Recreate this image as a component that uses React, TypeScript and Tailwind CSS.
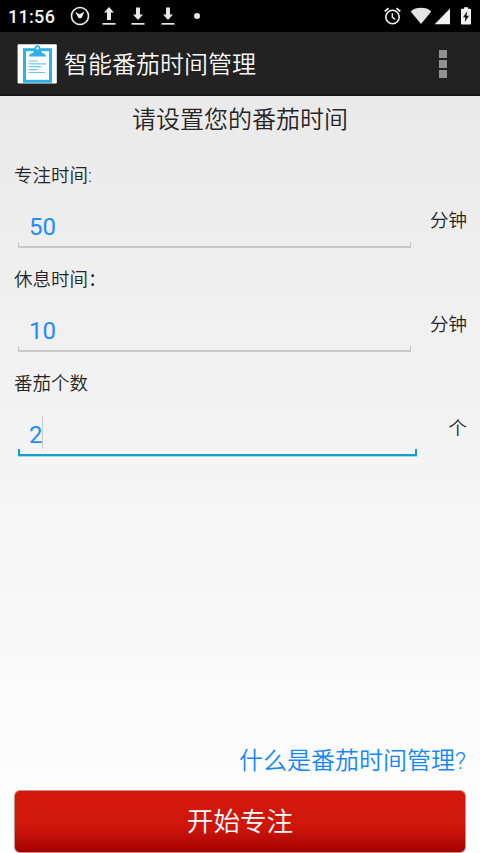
import React from "react";

const cjk = "font-['Roboto','Noto_Sans_CJK_SC',sans-serif]";

function ClockMark() {
  return (
    <svg className="block" width="20" height="20" viewBox="0 0 20 20" fill="none" stroke="#f2f2f2">
      <circle cx="10" cy="10" r="8.5" strokeWidth="1.6" />
      <path d="M5.2 5.8 L9.6 8.2 L14.4 5.5 L11.8 11.4 Q9.8 13.2 8.2 11.4z" fill="#f2f2f2" stroke="none" />
    </svg>
  );
}

function Transfer({ up = false }: { up?: boolean }) {
  return (
    <svg className="block" width="14" height="18" viewBox="0 0 14 18" fill="#e8e8e8">
      <path d={up ? "M7 0L12 5.5H9V13H5V5.5H2z" : "M5 0.5H9V7.5H12L7 13L2 7.5H5z"} />
      <rect x="0.5" y="16" width="13" height="1.7" />
    </svg>
  );
}

function StatusBar() {
  return (
    <div className="flex h-8 items-start bg-black text-[#f2f2f2]">
      <span className="ml-[8px] mt-[5px] w-[53px] font-['Roboto'] text-[18px] font-medium leading-[23px] tracking-[0.3px]">11:56</span>
      <div className="ml-[9px] mt-[6px]"><ClockMark /></div>
      <div className="ml-[12px] mt-[7px]"><Transfer up /></div>
      <div className="ml-[15px] mt-[7px]"><Transfer /></div>
      <div className="ml-[16px] mt-[7px]"><Transfer /></div>
      <div className="ml-[19px] mt-[13px] size-[6px] rounded-full bg-[#e8e8e8]" />
      <div className="ml-auto mt-[7px] flex items-start">
        <svg className="block" width="18" height="18" viewBox="0 0 18 18" fill="none" stroke="#f2f2f2">
          <circle cx="9.5" cy="10" r="6.7" strokeWidth="1.6" />
          <path d="M9.3 6.2v4.2l3 2" strokeWidth="1.3" />
          <path d="M1.7 4.4L5.5 1.2M13.5 1.2l3.8 3.2" strokeWidth="1.8" />
        </svg>
        <svg className="ml-[9px] block" width="22" height="18" viewBox="0 0 22 18" fill="#e4e4e4">
          <path d="M0.7 4.6C3.4 1.8 7 0.8 11 0.8S18.6 1.8 21.3 4.6L11 17z" />
        </svg>
        <svg className="ml-[2px] block" width="17" height="18" viewBox="0 0 17 18" fill="#f2f2f2">
          <path d="M16 1.5V17.3H0.7z" />
        </svg>
        <svg className="ml-[9px] mr-[8px] block" width="12" height="18" viewBox="0 0 12 18">
          <path d="M4 0.2h4v1.6h2.2q0.8 0 0.8 0.8v14q0 0.9-.8.9H1.8q-.8 0-.8-.9v-14q0-.8.8-.8H4z" fill="#f2f2f2" />
          <path d="M7.2 4.2L3 10.2h2.4L4.8 15L9 8.8H6.6z" fill="#111" />
        </svg>
      </div>
    </div>
  );
}

function Clipboard() {
  return (
    <svg className="block" width="40" height="40" viewBox="0 0 40 40" fill="none">
      <rect x="0.6" y="0.3" width="39.2" height="39.2" rx="1" fill="#fff" />
      <rect x="7.5" y="5.7" width="26" height="31.6" stroke="#2eb1e8" strokeWidth="3" />
      <path d="M12 12.5C12 10.8 13.4 9.4 15.8 9L17.3 6.5H23.8L25.2 9C27.6 9.4 29 10.8 29 12.5z" fill="#2eb1e8" />
      <circle cx="20.4" cy="4.2" r="2.1" fill="#fff" stroke="#2eb1e8" strokeWidth="1.7" />
      <path d="M11.5 17H21M11.5 19.8H29M11.5 22.7H24M11.5 25.6H20.5M11.5 28.5H28" stroke="#6dc4ea" strokeWidth="1.2" />
    </svg>
  );
}

interface FieldProps {
  label: string;
  value: string;
  unit: string;
  active?: boolean;
}

function Field({ label, value, unit, active = false }: FieldProps) {
  return (
    <div className="h-[104px] text-[#252525]">
      <div className="h-[36px] pl-[14px] pt-[4px] text-[18.5px] font-[350] leading-[28px]">{label}</div>
      <div className="flex items-start justify-between pl-[18px] pr-[13px]">
        <div className={`${active ? "w-[399px]" : "w-[393px]"}`}>
          <div className={`flex items-start pl-[11px] pt-[16px] text-[24px] leading-[34px] text-[#1e8cff] ${active ? "h-[47px]" : "h-[48px]"}`}>
            {value}
            {active && <span className="-ml-px h-[33px] w-px shrink-0 -translate-y-0.5 bg-[#cccccc]" />}
          </div>
          <div className={active
            ? "h-[7px] border-x-2 border-b-2 border-[#159fca] shadow-[0_1px_0_#a4dbeb]"
            : "h-[6px] border-x border-b-2 border-[#c8c8c8]"} />
        </div>
        <span className="mt-[13px] text-[18.5px] font-[350] leading-[28px]">{unit}</span>
      </div>
    </div>
  );
}

export default function App() {
  return (
    <div className={`flex h-[853px] w-[480px] flex-col overflow-hidden ${cjk}`}>
      <StatusBar />
      <header className="flex h-16 shrink-0 items-center border-b-2 border-[#151515] bg-[#222222] pl-[17px] pt-[2px] text-[#f8f8f8]">
        <Clipboard />
        <h1 className="ml-[7px] pt-[2px] text-[24px] font-[350] leading-[36px]">智能番茄时间管理</h1>
        <div className="ml-auto mr-[33px] flex flex-col gap-[2px]">
          <span className="size-[8px] bg-[#929292]" />
          <span className="size-[8px] bg-[#929292]" />
          <span className="size-[8px] bg-[#929292]" />
        </div>
      </header>
      <main className="flex min-h-0 flex-1 flex-col bg-gradient-to-b from-[#eaeaea] to-white">
        <h2 className="h-[62px] pt-[6px] text-center text-[24px] font-[350] leading-[36px] text-[#252525]">请设置您的番茄时间</h2>
        <Field label="专注时间:" value="50" unit="分钟" />
        <Field label="休息时间：" value="10" unit="分钟" />
        <Field label="番茄个数" value="2" unit="个" active />
        <div className="mt-auto">
          <a className="block pr-[14px] text-right text-[24px] font-[350] leading-[36px] text-[#1686ff]">什么是番茄时间管理?</a>
          <button className="mx-[14px] mt-[11px] block h-[63px] w-[452px] rounded-[6px] border border-[#c9918c] bg-[linear-gradient(#d3190c_0%,#ce160b_60%,#a40202_100%)] pt-px text-[26.6px] font-[350] leading-[36px] text-white">
            开始专注
          </button>
        </div>
      </main>
    </div>
  );
}
